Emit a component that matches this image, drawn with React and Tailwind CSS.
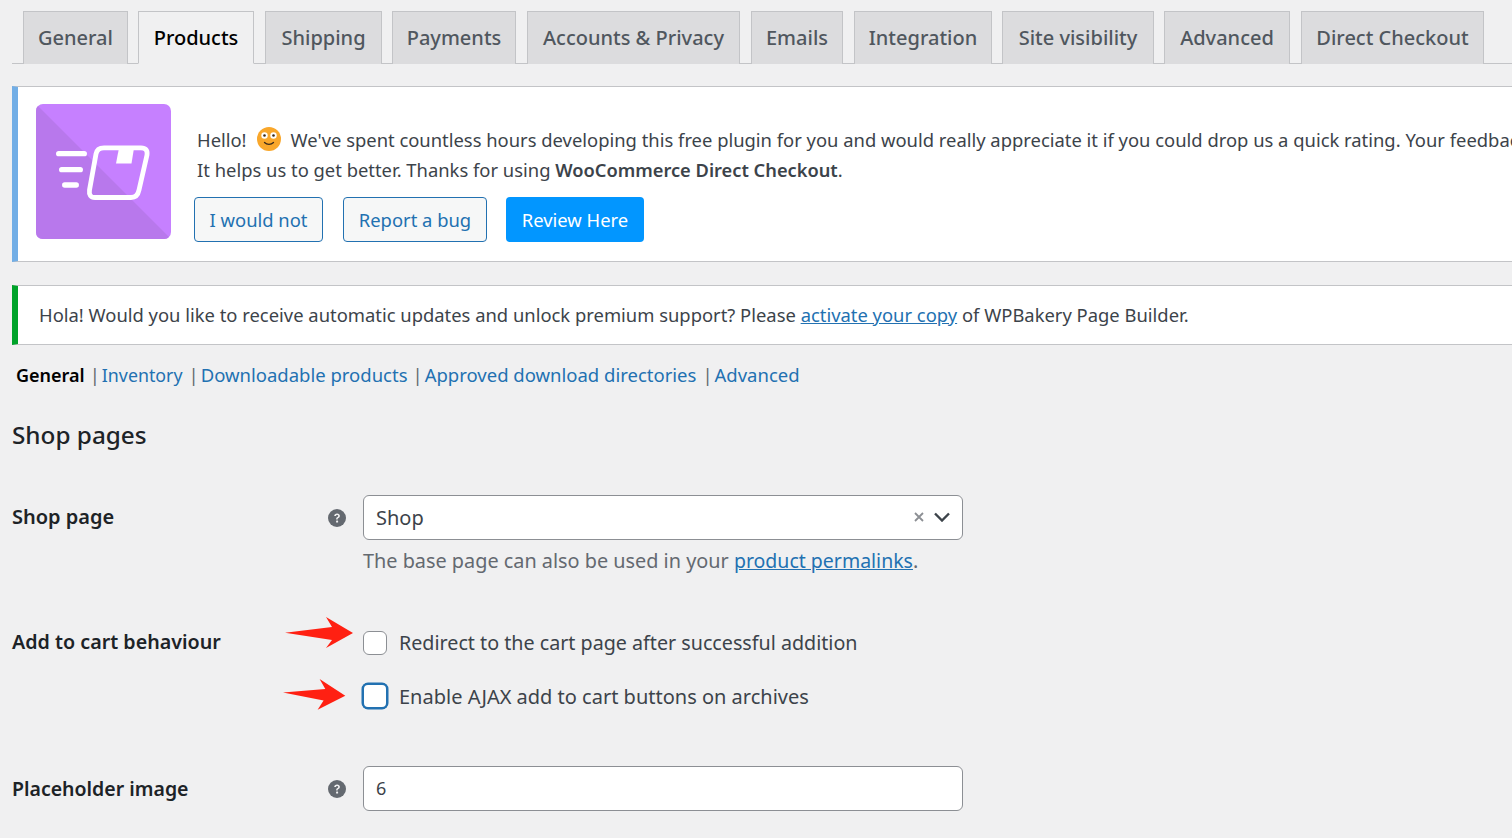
import React from 'react';

const TABS = [
    { label: 'General', w: 'w-[105px]', ml: 'ml-[11px]' },
    { label: 'Products', w: 'w-[116px]', ml: 'ml-[10px]', active: true },
    { label: 'Shipping', w: 'w-[117px]', ml: 'ml-[11px]' },
    { label: 'Payments', w: 'w-[124px]', ml: 'ml-[10px]' },
    { label: 'Accounts & Privacy', w: 'w-[213px]', ml: 'ml-[11px]' },
    { label: 'Emails', w: 'w-[92px]', ml: 'ml-[11px]' },
    { label: 'Integration', w: 'w-[138px]', ml: 'ml-[11px]' },
    { label: 'Site visibility', w: 'w-[152px]', ml: 'ml-[10px]' },
    { label: 'Advanced', w: 'w-[126px]', ml: 'ml-[10px]' },
    { label: 'Direct Checkout', w: 'w-[183px]', ml: 'ml-[11px]' },
];

const HelpIcon = () => (
    <svg viewBox="0 0 18 18" className="w-[18px] h-[18px]">
        <circle cx="9" cy="9" r="9" fill="#646970" />
        <path d="M6.2 7.1c0-1.7 1.2-2.7 2.9-2.7 1.6 0 2.8.9 2.8 2.4 0 1.2-.7 1.8-1.5 2.3-.6.4-.8.6-.8 1.2v.3H8.2v-.5c0-1 .4-1.500 1.100-2 .6-.4.9-.7.9-1.200 0-.6-.5-1-1.100-1-.7 0-1.100.5-1.200 1.200z" fill="#f0f0f1" />
        <rect x="8.100" y="11.600" width="2" height="2" rx=".4" fill="#f0f0f1" />
    </svg>
);

const PluginLogo = () => (
    <svg viewBox="0 0 135 135" className="w-[135px] h-[135px] shrink-0">
        <rect width="135" height="135" rx="7" fill="#c680ff" />
        <path d="M2 2 L133 133 Q131.500 135 128 135 H7 Q0 135 0 128 V7 Q0 3.500 2 2Z" fill="#b878ec" />
        <g fill="none" stroke="#fff" strokeLinecap="round" strokeWidth="5.300">
            <path d="M22.700 49.700 H48.300" />
            <path d="M25.700 65.700 H44.300" />
            <path d="M28.700 81 H40.300" />
        </g>
        <path d="M68 43.800 H105 Q112 43.800 111 51 L103 86 Q101.500 93.500 95 93.500 H59 Q52.500 93.500 53.500 86 L60 50 Q61 43.800 68 43.800Z" fill="none" stroke="#fff" strokeWidth="4.800" strokeLinejoin="round" />
        <path d="M83 44 H98 L95.500 59.500 H80 Z" fill="#fff" />
    </svg>
);

const Emoji = () => (
    <svg viewBox="0 0 24 24" className="w-6 h-6 inline-block shrink-0">
        <circle cx="12" cy="12" r="12" fill="#f9a72b" />
        <circle cx="7.500" cy="8.500" r="3.200" fill="#fff" />
        <circle cx="16.500" cy="8.500" r="3.200" fill="#fff" />
        <circle cx="7.500" cy="8.500" r="1.300" fill="#3a2a1a" />
        <circle cx="16.500" cy="8.500" r="1.300" fill="#3a2a1a" />
        <path d="M7.500 15.500c2.500 2.500 6.500 2.500 9 0" fill="none" stroke="#3a2a1a" strokeWidth="1.300" strokeLinecap="round" />
    </svg>
);

const Sep = ({ tight }) => <span className={`${tight ? 'ml-[5px]' : 'ml-[6px]'} mr-[2px] text-[18.4px] text-[#646970]`}>|</span>;

export default function App() {
    return (
        <div className="w-[1512px] h-[838px] overflow-hidden bg-[#f0f0f1] pl-3 text-[19.7px] text-[#3c434a] font-['Noto_Sans','Open_Sans',sans-serif]">
            {/* Tabs */}
            <div className="h-[64px] pt-[11px] flex border-b border-[#c3c4c7] w-[1500px]">
                {TABS.map(tab => (
                    <div
                        key={tab.label}
                        className={`${tab.w} ${tab.ml} h-[53px] shrink-0 flex items-center justify-center border border-[#c3c4c7] font-medium text-[20px] whitespace-nowrap ${tab.active ? 'bg-[#f0f0f1] border-b-[#f0f0f1] text-black' : 'bg-[#dcdcde] h-[52px] border-b-0 text-[#50575e]'}`}
                    >
                        {tab.label}
                    </div>
                ))}
            </div>

            {/* Review notice */}
            <div className="mt-[22px] h-[176px] w-[1520px] flex bg-white border border-[#c3c4c7] border-l-[6px] border-l-[#72aee6] text-[18.4px]">
                <div className="pt-[17px] pl-[18px]">
                    <PluginLogo />
                </div>
                <div className="ml-[26px] pt-[38px] whitespace-nowrap">
                    <div className="flex items-center h-[30px]">
                        Hello!
                        <span className="ml-[10px] mr-[10px] -mt-[3px] flex"><Emoji /></span>
                        We've spent countless hours developing this free plugin for you and would really appreciate it if you could drop us a quick rating. Your feedback
                    </div>
                    <div className="h-[30px] leading-[30px]">
                        It helps us to get better. Thanks for using <b className="font-semibold text-[18.250px]">WooCommerce Direct Checkout</b>.
                    </div>
                    <div className="flex mt-[12px] -ml-[3px] h-[45px]">
                        <div className="w-[129px] flex items-center justify-center rounded border border-[#2271b1] bg-[#f6f7f7] text-[#2271b1]">I would not</div>
                        <div className="w-[144px] ml-5 flex items-center justify-center rounded border border-[#2271b1] bg-[#f6f7f7] text-[#2271b1]">Report a bug</div>
                        <div className="w-[138px] ml-[19px] flex items-center justify-center rounded bg-[#0296ff] text-white">Review Here</div>
                    </div>
                </div>
            </div>

            {/* WPBakery notice */}
            <div className="mt-[23px] h-[60px] w-[1520px] flex items-center pl-[21px] bg-white border border-[#c3c4c7] border-l-[6px] border-l-[#00a32a] text-[18.4px]">
                Hola! Would you like to receive automatic updates and unlock premium support? Please&nbsp;
                <a className="text-[#2271b1] underline">activate your copy</a>
                &nbsp;of WPBakery Page Builder.
            </div>

            {/* Sub navigation */}
            <div className="mt-[15px] h-[30px] flex items-center pl-1 whitespace-nowrap text-[18.5px] text-[#2271b1]">
                <b className="font-semibold text-black text-[18px]">General</b>
                <Sep tight />
                <a className="text-[17.8px]">Inventory</a>
                <Sep />
                <a>Downloadable products</a>
                <Sep tight />
                <a>Approved download directories</a>
                <Sep />
                <a>Advanced</a>
            </div>

            <h2 className="mt-[28px] h-[34px] leading-[34px] text-[24.300px] font-medium text-[#1d2327]">Shop pages</h2>

            {/* Shop page */}
            <div className="mt-[43px] flex">
                <label className="w-[315px] pt-[7px] leading-[30px] h-[37px] font-semibold text-[#1d2327] text-[20px]">Shop page</label>
                <div className="w-9 pt-[14px] pl-px"><HelpIcon /></div>
                <div>
                    <div className="w-[600px] h-[45px] flex items-center pl-3 pr-3 bg-white rounded-md border border-[#8c8f94] text-[20px]">
                        <span className="flex-1">Shop</span>
                        <svg viewBox="0 0 10 10" className="w-[10px] h-[10px] mr-[10px] -mt-[2px]">
                            <path d="M1 1 L9 9 M9 1 L1 9" stroke="#8c8f94" strokeWidth="1.800" />
                        </svg>
                        <svg viewBox="0 0 16 10" className="w-4 h-[10px] -mt-[2px]">
                            <path d="M1 1.500 L8 8.500 L15 1.500" fill="none" stroke="#3c434a" strokeWidth="2.400" />
                        </svg>
                    </div>
                    <p className="mt-[6px] h-[30px] leading-[30px] text-[#646970] text-[19.850px]">
                        The base page can also be used in your <a className="text-[#2271b1] underline text-[19.500px]">product permalinks</a>.
                    </p>
                </div>
            </div>

            {/* Add to cart */}
            <div className="mt-[51px] flex">
                <label className="w-[351px] h-[30px] leading-[30px] font-semibold text-[#1d2327]">Add to cart behaviour</label>
                <div className="pt-px">
                    <div className="relative flex items-center h-[30px]">
                        <svg viewBox="0 0 68 31" className="absolute -left-[78px] -top-[11px] w-[68px] h-[31px]">
                            <path d="M0 15.700 L47 10 L41 0 L68 16 L41 31 L47 23 Z" fill="#ff2012" />
                        </svg>
                        <span className="w-6 h-6 rounded-md bg-white border border-[#8c8f94] mr-3" />
                        Redirect to the cart page after successful addition
                    </div>
                    <div className="relative flex items-center h-[30px] mt-6 text-[20px]">
                        <svg viewBox="0 0 63 31" className="absolute -left-[80px] -top-[3px] w-[63px] h-[31px]">
                            <path d="M0 13.400 L42.300 10 L36.600 0 L62.300 16.700 L34.600 30.700 L40.600 21.400 Z" fill="#ff2012" />
                        </svg>
                        <span className="w-[26px] h-[26px] -ml-px mb-[2px] rounded-md bg-white border-2 border-[#2271b1] shadow-[0_0_0_0.5px_#2271b1] mr-[11px]" />
                        Enable AJAX add to cart buttons on archives
                    </div>
                </div>
            </div>

            {/* Placeholder image */}
            <div className="mt-[54px] flex">
                <label className="w-[315px] h-[45px] leading-[45px] font-semibold text-[#1d2327] text-[19.500px]">Placeholder image</label>
                <div className="w-9 pt-[14px] pl-px"><HelpIcon /></div>
                <div className="w-[600px] h-[45px] flex items-center pl-3 bg-white rounded-md border border-[#8c8f94] text-[18px]">6</div>
            </div>
        </div>
    );
}
